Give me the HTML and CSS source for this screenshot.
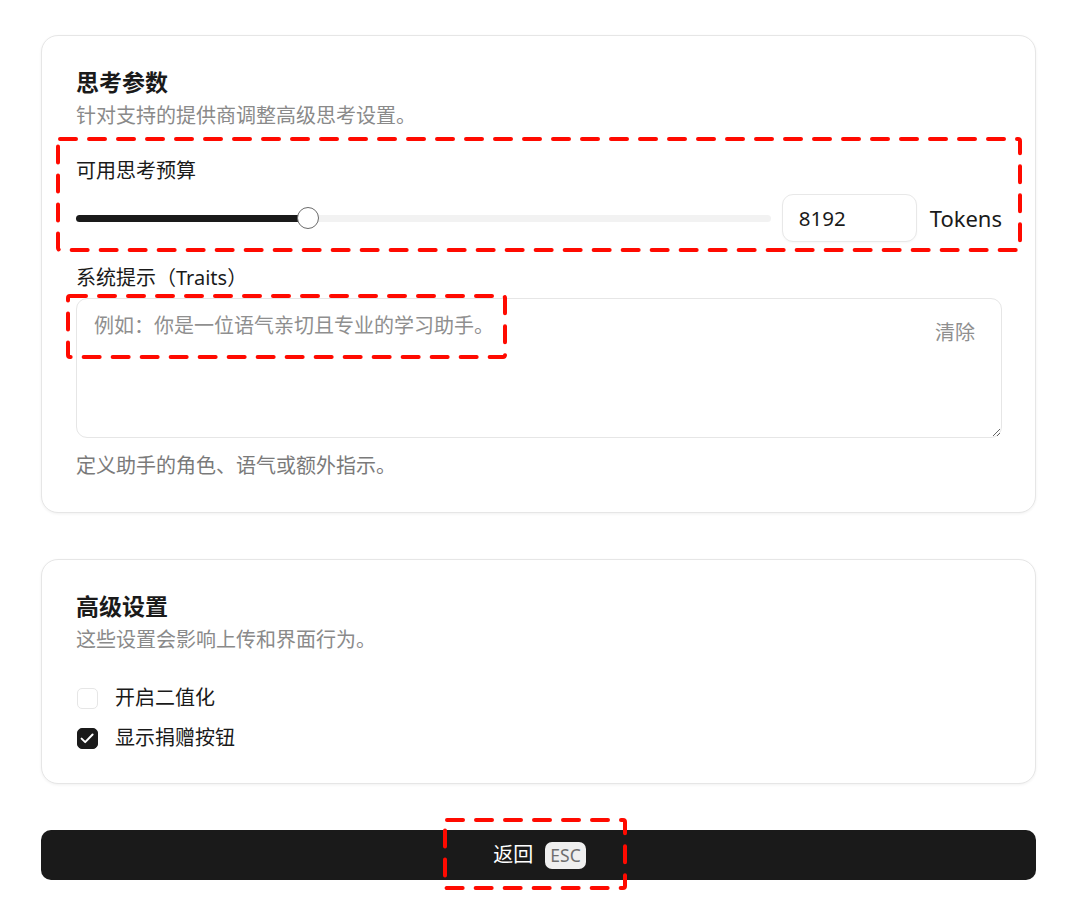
FILE: index.html
```html
<!DOCTYPE html>
<html lang="zh-CN">
<head>
<meta charset="utf-8">
<title>设置</title>
<link rel="stylesheet" href="styles.css">
</head>
<body>
<main class="page">
  <section class="card">
    <h2 class="card-title">思考参数</h2>
    <p class="card-desc">针对支持的提供商调整高级思考设置。</p>

    <div class="field budget">
      <div class="field-label">可用思考预算</div>
      <div class="slider-row">
        <div class="slider">
          <div class="track"></div>
          <div class="fill" style="width: 232px"></div>
          <div class="thumb" style="left: 221px"></div>
        </div>
        <input class="num-input" type="text" value="8192">
        <span class="unit">Tokens</span>
      </div>
    </div>

    <div class="field traits">
      <div class="field-label">系统提示（Traits）</div>
      <div class="textarea-wrap">
        <textarea class="textarea" placeholder="例如：你是一位语气亲切且专业的学习助手。"></textarea>
        <button class="clear-btn" type="button">清除</button>
      </div>
      <p class="hint">定义助手的角色、语气或额外指示。</p>
    </div>
  </section>

  <section class="card card-advanced">
    <h2 class="card-title">高级设置</h2>
    <p class="card-desc">这些设置会影响上传和界面行为。</p>
    <div class="checks">
      <label class="check-row">
        <span class="box"></span>
        <span class="check-text">开启二值化</span>
      </label>
      <label class="check-row">
        <span class="box checked">
          <svg viewBox="0 0 21 21" width="21" height="21"><path d="M4.6 10.6l3.6 3.5 7.4-7.6" fill="none" stroke="#fff" stroke-width="2" stroke-linecap="round" stroke-linejoin="round"/></svg>
        </span>
        <span class="check-text">显示捐赠按钮</span>
      </label>
    </div>
  </section>

  <button class="back-btn" type="button">
    <span class="back-text">返回</span>
    <span class="kbd">ESC</span>
  </button>
</main>

<svg class="annotations" width="1080" height="906" viewBox="0 0 1080 906">
  <g fill="none" stroke="#ff0a00" stroke-width="4" stroke-dasharray="16 13" stroke-linecap="round" stroke-linejoin="round">
    <rect x="58" y="139" width="962" height="111" rx="2"/>
    <rect x="68" y="296" width="437" height="61" rx="2"/>
    <rect x="445" y="820" width="180" height="68" rx="2"/>
  </g>
</svg>
</body>
</html>
```

FILE: styles.css
```css
* { box-sizing: border-box; }

html, body {
  margin: 0;
  padding: 0;
  background: #ffffff;
}

body {
  font-family: "Noto Sans", "Noto Sans CJK SC", sans-serif;
  color: #1a1a1a;
  width: 1080px;
  height: 906px;
  overflow: hidden;
  position: relative;
}

.page {
  width: 995px;
  margin-left: 41px;
  padding-top: 35px;
  display: flex;
  flex-direction: column;
}

.card {
  border: 1px solid #e6e6e6;
  border-radius: 17px;
  box-shadow: 0 1px 3px rgba(0, 0, 0, 0.06);
  padding: 30px 33px 30px 34px;
  background: #fff;
}

.card-advanced {
  margin-top: 46px;
  padding-bottom: 31px;
}

.card-title {
  margin: 0;
  font-size: 23px;
  line-height: 32px;
  font-weight: 700;
}

.card-desc {
  margin: 5px 0 0;
  font-size: 20px;
  line-height: 26px;
  color: #8a8a8a;
}

.field-label {
  font-size: 20px;
  line-height: 28px;
}

.budget {
  margin-top: 28px;
}

.slider-row {
  margin-top: 9px;
  display: flex;
  align-items: center;
  height: 48px;
}

.slider {
  position: relative;
  flex: 1;
  height: 22px;
}

.track {
  position: absolute;
  left: 0;
  right: 0;
  top: 7.5px;
  height: 7px;
  border-radius: 4px;
  background: #f2f2f2;
}

.fill {
  position: absolute;
  left: 0;
  top: 7.5px;
  height: 7px;
  border-radius: 4px;
  background: #1a1a1a;
}

.thumb {
  position: absolute;
  top: 0;
  width: 22px;
  height: 22px;
  border-radius: 50%;
  background: #fff;
  border: 1.5px solid #6b6b6b;
}

.num-input {
  margin-left: 11px;
  width: 135px;
  height: 48px;
  border: 1px solid #e8e8e8;
  border-radius: 11px;
  padding: 0 0 0 16px;
  font-family: "Noto Sans", sans-serif;
  font-size: 20.5px;
  color: #1a1a1a;
  background: #fff;
  outline: none;
  box-shadow: 0 1px 2px rgba(0, 0, 0, 0.03);
}

.unit {
  margin-left: 13px;
  font-size: 22px;
  line-height: 28px;
}

.traits {
  margin-top: 22px;
}

.textarea-wrap {
  position: relative;
  margin-top: 6px;
}

.textarea {
  display: block;
  width: 100%;
  height: 140px;
  border: 1px solid #e6e6e6;
  border-radius: 11px;
  padding: 13px 80px 0 17px;
  font-family: "Noto Sans", "Noto Sans CJK SC", sans-serif;
  font-size: 20px;
  line-height: 28px;
  color: #1a1a1a;
  resize: vertical;
  outline: none;
  background: #fff;
}

.textarea::placeholder {
  color: #8f8f8f;
}

.clear-btn {
  position: absolute;
  top: 20px;
  right: 27px;
  border: none;
  background: none;
  padding: 0;
  font-family: "Noto Sans CJK SC", sans-serif;
  font-size: 20px;
  line-height: 28px;
  color: #8f8f8f;
}

.hint {
  margin: 14px 0 2px;
  font-size: 20px;
  line-height: 28px;
  color: #7a7a7a;
}

.checks {
  margin-top: 31px;
  display: flex;
  flex-direction: column;
  gap: 12px;
}

.check-row {
  display: flex;
  align-items: center;
  height: 28px;
}

.box {
  width: 21px;
  height: 21px;
  border: 1px solid #e6e6e6;
  border-radius: 5px;
  background: #fff;
  display: flex;
  align-items: center;
  justify-content: center;
  margin-left: 1px;
}

.box.checked {
  background: #1a1a1a;
  border-color: #1a1a1a;
}

.box svg {
  flex: none;
}

.check-text {
  margin-left: 17px;
  font-size: 20px;
  line-height: 28px;
}

.back-btn {
  margin-top: 46px;
  height: 50px;
  width: 100%;
  border: none;
  border-radius: 10px;
  background: #1a1a1a;
  display: flex;
  align-items: center;
  justify-content: center;
  gap: 12px;
  padding: 0 0 0 2px;
  font-family: "Noto Sans", "Noto Sans CJK SC", sans-serif;
}

.back-text {
  color: #fff;
  font-size: 20px;
  line-height: 28px;
}

.kbd {
  background: #efefef;
  color: #6f6f6f;
  border-radius: 7px;
  height: 27px;
  padding: 0 5px;
  font-size: 17.5px;
  line-height: 27px;
}

.annotations {
  position: absolute;
  left: 0;
  top: 0;
  pointer-events: none;
}
```
